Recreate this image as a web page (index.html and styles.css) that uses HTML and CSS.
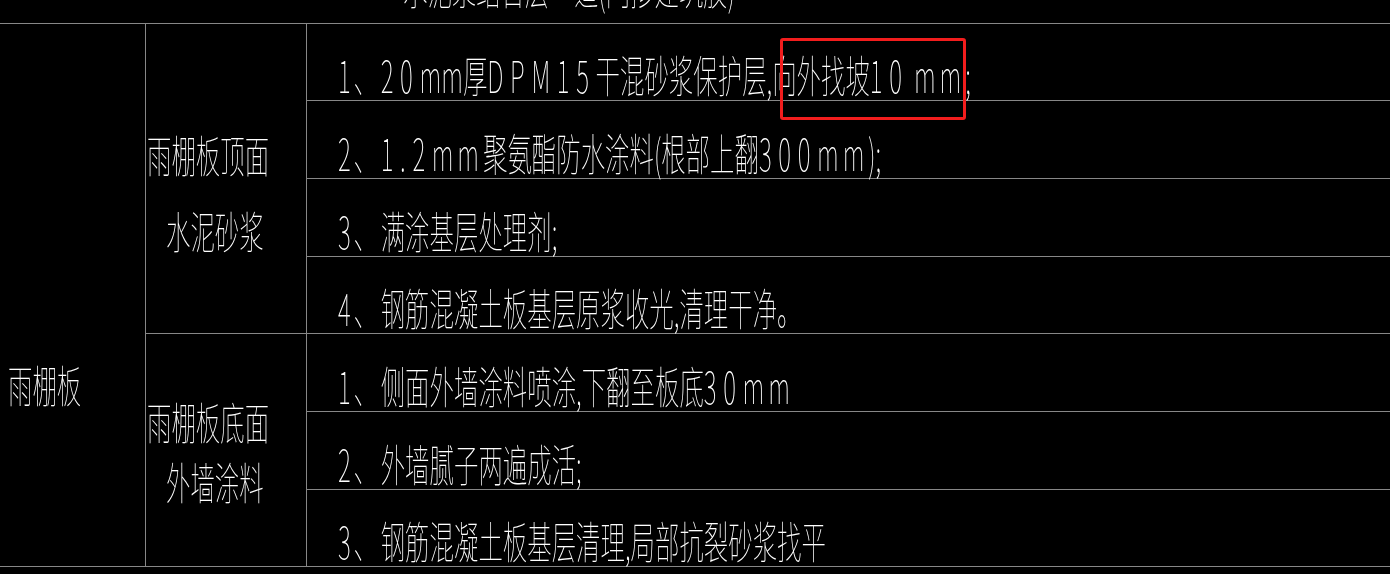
FILE: index.html
```html
<!DOCTYPE html>
<html lang="zh-CN">
<head>
    <meta charset="UTF-8">
    <title>雨棚板做法</title>
    <link rel="stylesheet" href="styles.css">
</head>
<body>
<div class="cut">
    <span class="t">水泥浆结合层一道(内掺建筑胶)</span>
</div>

<div class="sheet">
    <div class="part">
        <span class="t">雨棚板</span>
    </div>

    <div class="kind top">
        <div class="ln"><span class="t">雨棚板顶面</span></div>
        <div class="ln sub"><span class="t">水泥砂浆</span></div>
    </div>
    <div class="step mark-row">
        <span class="t"><i class="no">1、</i><i class="n">20</i>mm厚<i class="n">DPM15</i>干混砂浆保护层,向外找坡<i class="n">10</i> <i class="n mm">mm</i>;</span>
        <div class="mark"></div>
    </div>
    <div class="step">
        <span class="t"><i class="no">2、</i><i class="n">1.2</i><i class="n mm">mm</i>聚氨酯防水涂料(根部上翻<i class="n">300</i><i class="n mm">mm</i>);</span>
    </div>
    <div class="step">
        <span class="t"><i class="no">3、</i>满涂基层处理剂;</span>
    </div>
    <div class="step">
        <span class="t"><i class="no">4、</i>钢筋混凝土板基层原浆收光,清理干净。</span>
    </div>

    <div class="kind bottom">
        <div class="ln"><span class="t">雨棚板底面</span></div>
        <div class="ln sub"><span class="t">外墙涂料</span></div>
    </div>
    <div class="step">
        <span class="t"><i class="no">1、</i>侧面外墙涂料喷涂,下翻至板底<i class="n">30</i><i class="n mm">mm</i></span>
    </div>
    <div class="step">
        <span class="t"><i class="no">2、</i>外墙腻子两遍成活;</span>
    </div>
    <div class="step">
        <span class="t"><i class="no">3、</i>钢筋混凝土板基层清理,局部抗裂砂浆找平</span>
    </div>
</div>
</body>
</html>
```

FILE: styles.css
```css
body {
    margin: 0;
    background: #000;
    color: #fff;
    font-family: "Noto Sans CJK SC", "Noto Sans", sans-serif;
    font-weight: 100;
    overflow: hidden;
}

/* CAD text is tall and narrow */
.t {
    display: inline-block;
    font-size: 44px;
    line-height: 44px;
    white-space: nowrap;
    transform: scaleX(0.555);
    transform-origin: 0 0;
    filter: grayscale(1);
}

.t i {
    font-style: normal;
}

.n {
    letter-spacing: 12px;
}

.n.mm {
    letter-spacing: 7px;
}

.no {
    letter-spacing: 5px;
}

.cut {
    height: 23px;
    display: flex;
    align-items: flex-end;
    padding: 0 0 15px 403px;
    box-sizing: border-box;
    overflow: hidden;
}

.sheet {
    display: grid;
    grid-template-columns: 145px 160px minmax(0, 1fr);
    grid-template-rows: 76px 77px 77px 76px 77px 77px 76px;
    gap: 1px;
    background: #878787;
    border-top: 1px solid #878787;
    border-bottom: 1px solid #878787;
}

.sheet > div {
    background: #000;
}

.part {
    grid-row: 1 / 8;
    padding: 338px 0 0 8px;
}

.kind {
    padding-left: 1px;
}

.kind.top {
    grid-row: 1 / 5;
    padding-top: 108px;
}

.kind.bottom {
    grid-row: 5 / 8;
    padding-top: 65px;
}

.kind .ln {
    height: 44px;
}

.top .ln + .ln {
    margin-top: 32px;
}

.bottom .ln + .ln {
    margin-top: 16px;
}

.kind .sub {
    padding-left: 19px;
}

.step {
    display: flex;
    align-items: flex-end;
    padding: 0 0 4px 31px;
}

.mark-row {
    position: relative;
}

.mark {
    position: absolute;
    left: 473px;
    top: 14px;
    width: 186px;
    height: 82px;
    box-sizing: border-box;
    border: 3px solid #f21d1d;
    border-radius: 3px;
}
```
